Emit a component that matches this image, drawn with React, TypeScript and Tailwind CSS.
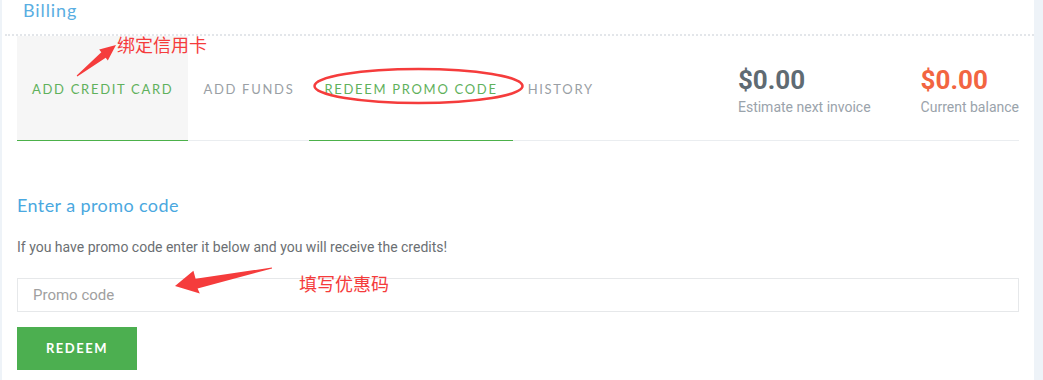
import { ReactNode } from "react";

const TABS = [
  { label: "ADD CREDIT CARD", active: true, selected: false },
  { label: "ADD FUNDS", active: false, selected: false },
  { label: "REDEEM PROMO CODE", active: false, selected: true },
  { label: "HISTORY", active: false, selected: false },
];

const Annotations = (): ReactNode => (
  <svg className="pointer-events-none absolute inset-0" width="1043" height="380">
    <polygon
      fill="#f53c3c"
      points="77.3,76.4 105.7,57.7 107.8,60.5 116,45 99.2,49.5 101.3,52.3 76.7,75.6"
    />
    <ellipse cx="418.5" cy="86" rx="104" ry="17" fill="none" stroke="#f53c3c" strokeWidth="2.5" />
    <polygon
      fill="#f53c3c"
      points="272.1,268.5 197.6,288.5 199.8,293.4 175,286 193.4,270.8 195.6,278.7 271.9,267.5"
    />
  </svg>
);

const App = (): ReactNode => {
  return (
    <div className="relative flex h-[380px] w-[1043px] overflow-hidden bg-[#eef3f8] font-['Roboto',sans-serif]">
      <div className="ml-[2px] flex w-[1032px] flex-col bg-white">
        <div className="h-[34px] pl-[21px] font-['Lato',sans-serif] text-[18px] leading-[21px] tracking-[0.9px] text-[#5aaee2]">
          Billing
        </div>
        <div className="ml-[3px] border-t-2 border-dotted border-[#e3e6ea]" />
        <div className="flex flex-col px-[15px]">
          <div className="flex h-[105px] items-stretch border-b border-[#eaedf0]">
            {TABS.map((t) => (
              <div
                key={t.label}
                className={`-mb-px flex items-center border-b px-[15px] pt-[3px] font-['Lato',sans-serif] text-[13px] tracking-[1.7px] ${
                  t.active ? "border-[#4cb14a] bg-[#f6f6f6]" : t.selected ? "border-[#4cb14a]" : "border-transparent"
                } ${t.active || t.selected ? "text-[#5fb15c]" : "text-[#9a9fa5]"}`}
              >
                {t.label}
              </div>
            ))}
            <div className="ml-auto flex gap-[50px] pt-[29px]">
              <div className="flex flex-col">
                <span className="text-[26px] font-bold leading-[30px] text-[#5f6b73]">$0.00</span>
                <span className="mt-[4px] text-[14px] leading-[16px] text-[#9aa3ab]">Estimate next invoice</span>
              </div>
              <div className="flex flex-col">
                <span className="text-[26px] font-bold leading-[30px] text-[#f26541]">$0.00</span>
                <span className="mt-[4px] text-[14px] leading-[16px] text-[#9aa3ab]">Current balance</span>
              </div>
            </div>
          </div>
          <h2 className="mt-[54px] font-['Lato',sans-serif] text-[18px] leading-[20px] tracking-[0.4px] text-[#4aa8e0]">
            Enter a promo code
          </h2>
          <p className="mt-[24px] text-[14px] leading-[16px] text-[#6b6f73]">
            If you have promo code enter it below and you will receive the credits!
          </p>
          <input
            className="mt-[23px] h-[34px] w-full border border-[#e6e8ea] px-[15px] text-[15px] text-[#555] outline-none placeholder:text-[#a0a0a0]"
            placeholder="Promo code"
          />
          <button className="mt-[15px] h-[43px] w-[120px] bg-[#4caf50] font-['Lato',sans-serif] text-[13px] font-bold tracking-[1.5px] text-white">
            REDEEM
          </button>
        </div>
      </div>
      <span className="absolute left-[117px] top-[33px] font-['Noto_Sans_CJK_SC',sans-serif] text-[18px] leading-[22px] text-[#f53c3c]">
        绑定信用卡
      </span>
      <span className="absolute left-[299px] top-[272px] font-['Noto_Sans_CJK_SC',sans-serif] text-[18px] leading-[22px] text-[#f53c3c]">
        填写优惠码
      </span>
      <Annotations />
    </div>
  );
};

export default App;
